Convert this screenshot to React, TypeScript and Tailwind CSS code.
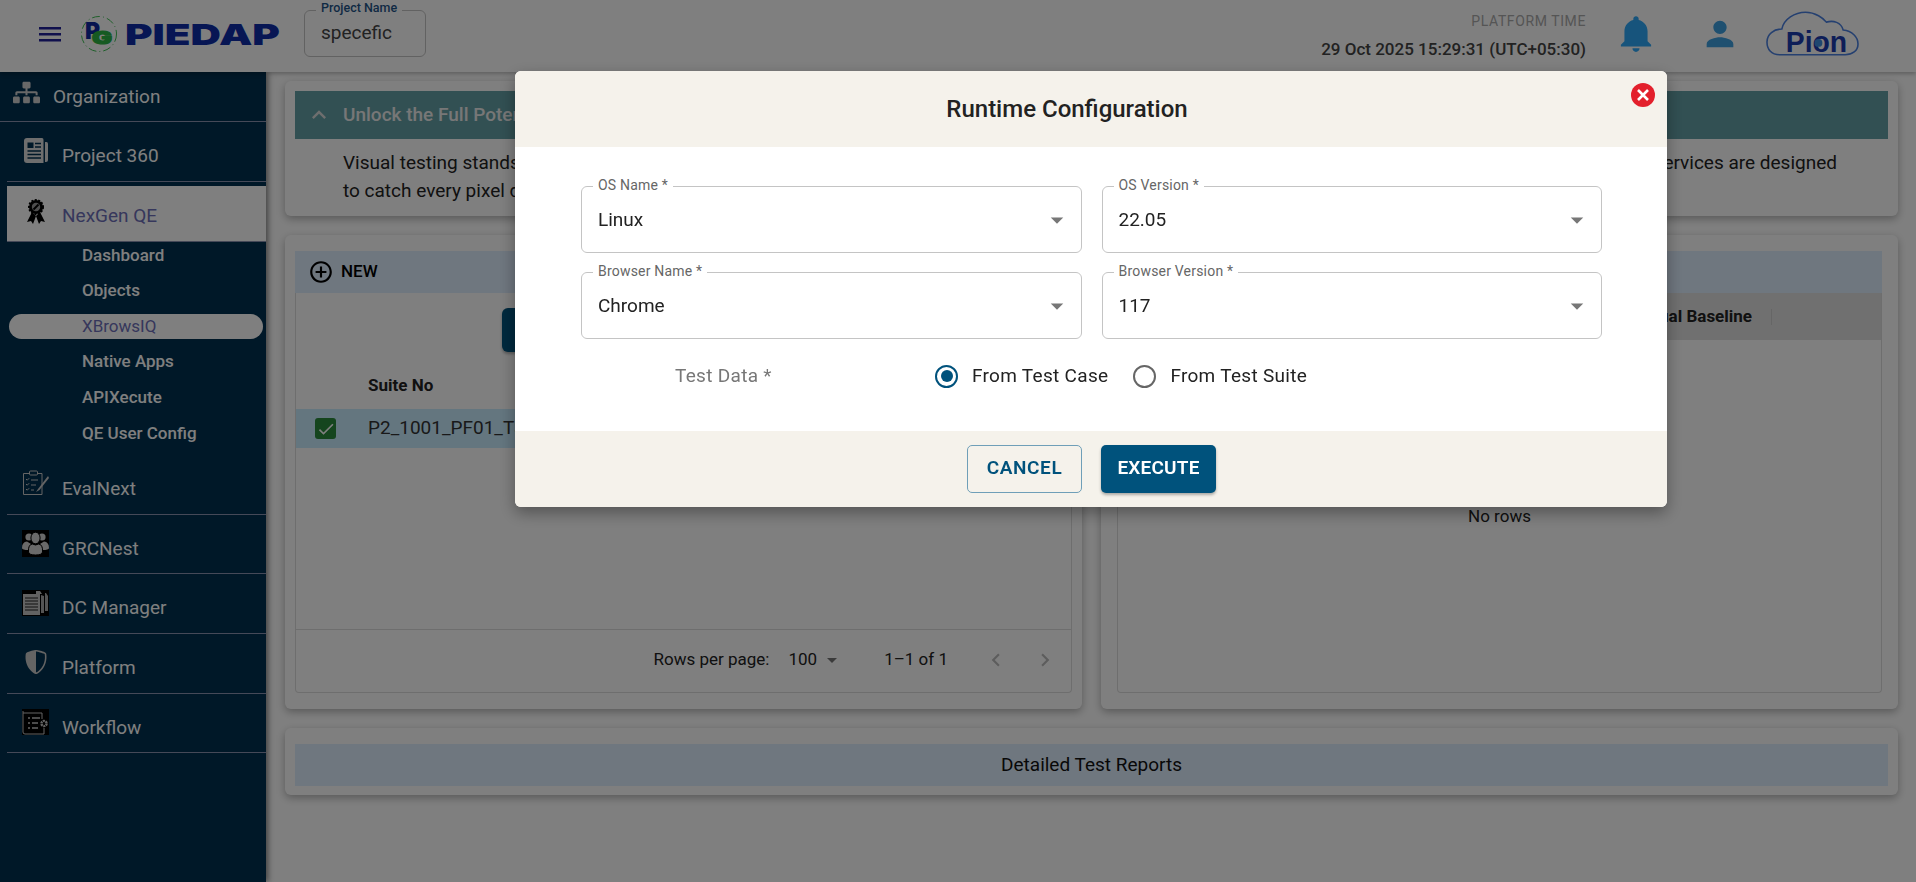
import React from "react";
import { FaSitemap } from "react-icons/fa";
import { BsShieldShaded } from "react-icons/bs";
import { IoMdNotifications } from "react-icons/io";
import { MdPerson, MdCheck, MdArrowDropDown, MdKeyboardArrowUp, MdAddCircleOutline, MdChevronLeft, MdChevronRight } from "react-icons/md";

function Rosette() {
  return (
    <svg width="20" height="25" viewBox="0 0 20 25">
      <path d="M6 13 L1 23 L5 22 L7 25 L10 17 Z M14 13 L19 23 L15 22 L13 25 L10 17 Z" fill="#000" />
      <circle cx="10" cy="8" r="7" fill="#000" stroke="#000" strokeDasharray="2 1.5" strokeWidth="2" />
      <circle cx="10" cy="8" r="4.2" fill="#9a9a9a" />
      <path d="M7.5 10.5 L12.5 5.5" stroke="#000" strokeWidth="2" />
    </svg>
  );
}
function PaperIcon() {
  return (
    <svg width="24" height="25" viewBox="0 0 24 25">
      <path d="M3 0 H18 Q19.5 0 19.5 2 V25 H3 Q0 25 0 22 V3 Q0 0 3 0 Z" fill="#dcdcdc" />
      <path d="M21 4 H22.5 Q24 4 24 6 V22 Q24 24 22 24 H21 Z" fill="#dcdcdc" />
      <rect x="3.5" y="4.5" width="6" height="5.5" fill="#003050" />
      <path d="M11 5.5 H17 M11 9 H17 M3.5 13 H17 M3.5 16.5 H17 M3.5 20 H17" stroke="#003050" strokeWidth="1.6" />
    </svg>
  );
}
function EvalIcon() {
  return (
    <svg width="27" height="26" viewBox="0 0 27 26" fill="none" stroke="#c8c8c8" strokeWidth="1">
      <path d="M3 3.5 H8 M16 3.5 H20 V24.5 H1.5 V3.5 H3" />
      <rect x="7.5" y="1" width="8" height="4" rx="1" />
      <path d="M4 9 l1.2 1.2 2-2 M4 14 l1.2 1.2 2-2 M4 19 l1.2 1.2 2-2 M9 10 H16 M9 15 H14 M9 20 H12" />
      <path d="M26 6 L16 19 L14 22 L17.5 20 L27 8 Z" fill="#c8c8c8" stroke="none" />
    </svg>
  );
}
function PeopleIcon() {
  return (
    <svg width="27" height="27" viewBox="0 0 27 27" className="bg-black" fill="#d4d4d4">
      <circle cx="7" cy="7" r="3.6" />
      <circle cx="20" cy="7" r="3.6" />
      <path d="M0 18 Q0 12 5 11.5 L9 14 Q6 17 6.5 20 Q0 20 0 18 Z M27 18 Q27 12 22 11.5 L18 14 Q21 17 20.5 20 Q27 20 27 18 Z" />
      <ellipse cx="13.5" cy="8" rx="4.6" ry="5.8" stroke="#000" strokeWidth="1" />
      <path d="M6.5 22 Q6 14.5 10.5 14 Q13.5 16 16.5 14 Q21 14.5 20.5 22 Q20 25 13.5 25 Q7 25 6.5 22 Z" stroke="#000" strokeWidth="1" />
    </svg>
  );
}
function DocsIcon() {
  return (
    <svg width="27" height="26" viewBox="0 0 27 26" className="bg-black">
      <rect x="1" y="4" width="17" height="21" fill="#c4c4c4" />
      <path d="M3 8 H16 M3 11 H16 M3 14 H16 M3 17 H16 M3 20 H16" stroke="#222" strokeWidth="1" />
      <path d="M19 5 V23 H22 V6 Z M23 3 V21 H26 V6 L24 3 Z" fill="#a8a8a8" />
      <path d="M14 1 H18 L20 4 H14 Z" fill="#c4c4c4" />
    </svg>
  );
}
function FlowIcon() {
  return (
    <svg width="27" height="26" viewBox="0 0 27 26" className="bg-black" fill="none" stroke="#c8c8c8">
      <path d="M1 23 V2 M1 23 Q1 25 3 25 H22 V19 M1 4 H20 V10" strokeWidth="1" />
      <path d="M6 9 H8 M10 9 H18 M6 14 H8 M10 14 H16 M6 19 H8 M10 19 H16" strokeWidth="1.4" />
      <circle cx="22" cy="14.5" r="2.6" strokeWidth="2.4" strokeDasharray="2 0.7" />
    </svg>
  );
}
function PGLogo() {
  return (
    <svg width="38" height="36" viewBox="0 0 38 36">
      <circle cx="19" cy="18" r="17.5" fill="none" stroke="#3fbf55" strokeWidth="1" strokeDasharray="8 3 1 3" />
      <text x="5" y="23" fontFamily="Inter" fontWeight="900" fontSize="23" fill="#0e28a0">P</text>
      <text x="12" y="28" fontFamily="Inter" fontWeight="900" fontSize="17" fill="#2cb544" stroke="#2cb544" strokeWidth="1.2" textLength="20" lengthAdjust="spacingAndGlyphs">G</text>
    </svg>
  );
}
function PionLogo() {
  return (
    <svg width="93" height="46" viewBox="0 0 94 46">
      <path d="M14 44 C5 44 1 38 1 31 C1 23 8 18 16 18 C18 8 29 1 40 1 C50 1 58 7 61 11 C68 9 76 11 78 19 C87 20 93 26 93 33 C93 40 87 44 80 44 Z" fill="none" stroke="#4a80e0" strokeWidth="1.6" />
      <text x="20" y="41" fontFamily="Liberation Sans" fontWeight="700" fontSize="29" fill="#1c3cb0" textLength="62" lengthAdjust="spacingAndGlyphs">Pion</text>
      <circle cx="53" cy="32" r="4" fill="#3f8fe0" />
    </svg>
  );
}

const navAfter = [
  { label: "EvalNext", icon: <EvalIcon /> },
  { label: "GRCNest", icon: <PeopleIcon /> },
  { label: "DC Manager", icon: <DocsIcon /> },
  { label: "Platform", icon: <span className="flex w-[27px] justify-center text-[#c8c8c8]"><BsShieldShaded size={24} /></span> },
  { label: "Workflow", icon: <FlowIcon /> },
];
const subs = ["Dashboard", "Objects", "XBrowsIQ", "Native Apps", "APIXecute", "QE User Config"];

function NavItem({ label, icon }: { label: string; icon: React.ReactNode }) {
  return (
    <div className="ml-[7px] flex h-[59.6px] items-center gap-[13px] border-b border-[#8a93b0] pl-[15px] text-[19px] text-white">
      <span className="flex h-[27px] w-[27px] shrink-0 -translate-y-[1px] items-center justify-center">{icon}</span>
      <span className="translate-y-[5px]">{label}</span>
    </div>
  );
}

function Sidebar() {
  return (
    <aside className="relative z-10 flex w-[266px] shrink-0 flex-col bg-[#003050] shadow-[2px_0_6px_rgba(0,0,0,0.5)]">
      <div className="flex h-[50px] items-center gap-[13px] border-b border-[#8a93b0] pl-[13px] text-[19px] text-white">
        <FaSitemap size={27} className="-translate-y-[4px] text-[#d0d0d0]" />
        <span className="translate-y-[1px]">Organization</span>
      </div>
      <NavItem label="Project 360" icon={<PaperIcon />} />
      <div className="ml-[7px] mt-[4px] flex h-[56px] items-center gap-[13px] border-b border-[#8a93b0] bg-white pl-[15px] text-[19px] text-[#6d6fb8]">
        <span className="flex h-[27px] w-[27px] shrink-0 -translate-y-[2px] items-center justify-center"><Rosette /></span>
        <span className="translate-y-[3px]">NexGen QE</span>
      </div>
      <div className="-mt-[4px] flex flex-col">
        {subs.map((s) => (
          <div key={s} className="flex h-[35.6px] items-center pl-[9px] pr-[3px] text-[17px] font-medium">
            <div className={s === "XBrowsIQ" ? "flex h-[25px] w-full items-center rounded-full bg-white pl-[73px] font-normal text-[#6d6fb8]" : "flex h-[25px] w-full items-center pl-[73px] text-white"}>{s}</div>
          </div>
        ))}
      </div>
      <div className="mt-[4px]">
        {navAfter.map((n) => <NavItem key={n.label} label={n.label} icon={n.icon} />)}
      </div>
    </aside>
  );
}

function Header() {
  return (
    <header className="relative z-20 flex h-[72px] shrink-0 items-center bg-white pb-[4px] pl-[38px] pr-[57px] shadow-[0_2px_4px_rgba(0,0,0,0.25)]">
      <svg width="24" height="24" viewBox="0 0 24 24" fill="#20209a"><path d="M1 5 H23 V7.5 H1 Z M1 11 H23 V13.5 H1 Z M1 17 H23 V19.5 H1 Z" /></svg>
      <div className="ml-[18px]"><PGLogo /></div>
      <div className="ml-[7px] w-[155px]">
        <div className="origin-left scale-x-[1.45] font-['Inter',sans-serif] text-[29px] font-black leading-none text-[#0e2ca8]">PIEDAP</div>
      </div>
      <div className="relative -mt-[1px] ml-[24px] flex h-[47px] w-[122px] items-center rounded-[6px] border border-[#c4c4c4] pl-[16px] text-[19px] text-[#444]">
        specefic
        <span className="absolute -top-[11px] left-[11px] bg-white px-[5px] text-[12.5px] font-medium leading-[16px] text-[#1f5488]">Project Name</span>
      </div>
      <div className="ml-auto flex translate-x-[1px] translate-y-[1px] flex-col items-end">
        <span className="text-[14px] leading-[20px] tracking-[0.6px] text-[#aaa]">PLATFORM TIME</span>
        <span className="mt-[8px] text-[17px] font-medium leading-[20px] text-[#444]">29 Oct 2025 15:29:31 (UTC+05:30)</span>
      </div>
      <div className="ml-[29px] flex w-[44px] justify-center text-[#2fa8f8]"><IoMdNotifications size={44} /></div>
      <div className="ml-[40px] flex w-[44px] justify-center text-[#3fa0e0]"><MdPerson size={40} /></div>
      <div className="ml-[24px]"><PionLogo /></div>
    </header>
  );
}

function Main() {
  return (
    <main className="flex min-w-0 flex-1 flex-col gap-[19px] pl-[19px] pr-[18px] pt-[9px] text-[#222]">
      <section className="h-[135px] rounded-[6px] bg-white p-[10px] shadow-[0_3px_8px_rgba(0,0,0,0.3)]">
        <div className="flex h-[48px] items-center bg-[#64a0a6] pl-[10px] text-white">
          <MdKeyboardArrowUp size={28} className="text-[#ddd]" />
          <span className="ml-[10px] whitespace-nowrap text-[19px] font-medium text-[#eee]">Unlock the Full Potential of Visual Testing</span>
        </div>
        <div className="pl-[48px] pt-[10px] text-[19px] leading-[28px]">
          <div className="flex w-[1494px] justify-between"><span>Visual testing stands</span><span>services are designed</span></div>
          <div>to catch every pixel difference</div>
        </div>
      </section>

      <div className="grid h-[474px] grid-cols-[797px_797px] gap-[19px]">
        <section className="flex flex-col rounded-[6px] bg-white px-[10px] pb-[16px] pt-[16px] shadow-[0_3px_8px_rgba(0,0,0,0.3)]">
          <div className="flex h-[42px] shrink-0 items-center gap-[2px] bg-[#dfeeff] pl-[13px] text-[17px] font-medium text-black">
            <MdAddCircleOutline size={26} />
            <span className="ml-[5px]">NEW</span>
          </div>
          <div className="flex min-h-0 flex-1 flex-col rounded-b-[4px] border border-t-0 border-[#ddd]">
            <div className="flex h-[59px] shrink-0 pl-[206px] pt-[15px]">
              <div className="h-[44px] w-[120px] rounded-[6px] bg-[#00527c] shadow-[0_2px_3px_rgba(0,0,0,0.3)]" />
            </div>
            <div className="flex h-[57px] shrink-0 items-center pl-[72px] pt-[10px] text-[17px] font-bold text-[#222]">Suite No</div>
            <div className="flex h-[39px] shrink-0 items-center bg-[#c8ecff] pl-[19px] text-[19px] text-[#333]">
              <span className="flex h-[21px] w-[21px] items-center justify-center rounded-[3px] bg-[#2a8a3c] text-white"><MdCheck size={20} /></span>
              <span className="ml-[32px] whitespace-nowrap">P2_1001_PF01_TS01</span>
            </div>
            <div className="flex-1" />
            <div className="flex h-[63px] shrink-0 items-center justify-end border-t border-[#ddd] pb-[2px] pr-[13px] text-[17px] text-[#222]">
              <span>Rows per page:</span>
              <span className="ml-[19px]">100</span>
              <MdArrowDropDown size={24} className="ml-[3px] text-[#777]" />
              <span className="ml-[40px]">1–1 of 1</span>
              <MdChevronLeft size={26} className="ml-[35px] text-[#bbb]" />
              <MdChevronRight size={26} className="ml-[23px] text-[#bbb]" />
            </div>
          </div>
        </section>

        <section className="flex flex-col rounded-[6px] bg-white px-[16px] pb-[16px] pt-[16px] shadow-[0_3px_8px_rgba(0,0,0,0.3)]">
          <div className="h-[42px] shrink-0 bg-[#dfeeff]" />
          <div className="flex min-h-0 flex-1 flex-col rounded-b-[4px] border border-t-0 border-[#ddd]">
            <div className="flex h-[47px] shrink-0 items-center justify-end bg-[#e0e0e0] pr-[109px] text-[17px] font-bold text-[#222]">
              <span>Visual Baseline</span>
              <span className="ml-[19px] h-[16px] w-[1px] bg-[#ccc]" />
            </div>
            <div className="flex flex-1 justify-center pt-[164px] text-[17px] text-[#222]">No rows</div>
          </div>
        </section>
      </div>

      <section className="h-[67px] rounded-[6px] bg-white px-[10px] pt-[16px] shadow-[0_3px_8px_rgba(0,0,0,0.3)]">
        <div className="flex h-[42px] items-center justify-center bg-[#dfeeff] text-[19px] text-[#111]">Detailed Test Reports</div>
      </section>
    </main>
  );
}

function Field({ label, value }: { label: string; value: string }) {
  return (
    <div className="relative flex h-[67px] items-center rounded-[6px] border border-[#c4c4c4] pl-[16px] pr-[9px] text-[19px] text-[#222]">
      <span className="translate-y-[1px]">{value}</span>
      <MdArrowDropDown size={30} className="ml-auto text-[#777]" />
      <span className="absolute -top-[11px] left-[11px] bg-white px-[5px] text-[14px] leading-[18px] tracking-[0.2px] text-[#666]">{label}</span>
    </div>
  );
}

function Modal() {
  return (
    <div className="fixed inset-0 z-50 flex items-start justify-center bg-black/50 pl-[266px] pt-[71px]">
      <div className="flex h-[436px] w-[1152px] flex-col overflow-hidden rounded-[6px] bg-white shadow-[0_6px_16px_rgba(0,0,0,0.35)]">
        <div className="flex h-[76px] shrink-0 bg-[#f5f2eb]">
          <div className="flex flex-1 items-center justify-center text-[24px] font-medium text-[#222]">Runtime Configuration</div>
          <div className="flex h-[47px] w-[48px] items-center justify-center">
            <span className="flex h-[24px] w-[24px] items-center justify-center rounded-full bg-[#e3202c]">
              <svg width="12" height="12" viewBox="0 0 12 12" stroke="#fff" strokeWidth="2.6"><path d="M1 1 L11 11 M11 1 L1 11" /></svg>
            </span>
          </div>
        </div>
        <div className="flex-1 pl-[66px] pr-[65px] pt-[39px]">
          <div className="grid grid-cols-2 gap-x-[20px] gap-y-[19px]">
            <Field label="OS Name *" value="Linux" />
            <Field label="OS Version *" value="22.05" />
            <Field label="Browser Name *" value="Chrome" />
            <Field label="Browser Version *" value="117" />
          </div>
          <div className="mt-[21px] flex h-[32px] items-center pl-[94px] text-[19px] tracking-[0.3px] text-[#222]">
            <span className="w-[260px] text-[#777]">Test Data *</span>
            <span className="flex h-[23px] w-[23px] items-center justify-center rounded-full border-[2.5px] border-[#00527c]"><span className="h-[12px] w-[12px] rounded-full bg-[#00527c]" /></span>
            <span className="ml-[14px]">From Test Case</span>
            <span className="ml-[25px] h-[23px] w-[23px] rounded-full border-[2.5px] border-[#666]" />
            <span className="ml-[14px]">From Test Suite</span>
          </div>
        </div>
        <div className="flex h-[76px] shrink-0 items-center justify-center gap-[19px] bg-[#f5f2eb] pb-[1px] pl-[1px]">
          <button className="h-[48px] w-[115px] rounded-[5px] border border-[#6f9fb8] text-[19px] font-semibold tracking-[0.6px] text-[#00527c]">CANCEL</button>
          <button className="h-[48px] w-[115px] rounded-[5px] bg-[#00527c] text-[19px] font-semibold tracking-[0.2px] text-white shadow-[0_2px_3px_rgba(0,0,0,0.3)]">EXECUTE</button>
        </div>
      </div>
    </div>
  );
}

export default function App() {
  return (
    <div className="flex h-screen flex-col overflow-hidden bg-white font-['Roboto',sans-serif]">
      <Header />
      <div className="flex min-h-0 flex-1">
        <Sidebar />
        <Main />
      </div>
      <Modal />
    </div>
  );
}
